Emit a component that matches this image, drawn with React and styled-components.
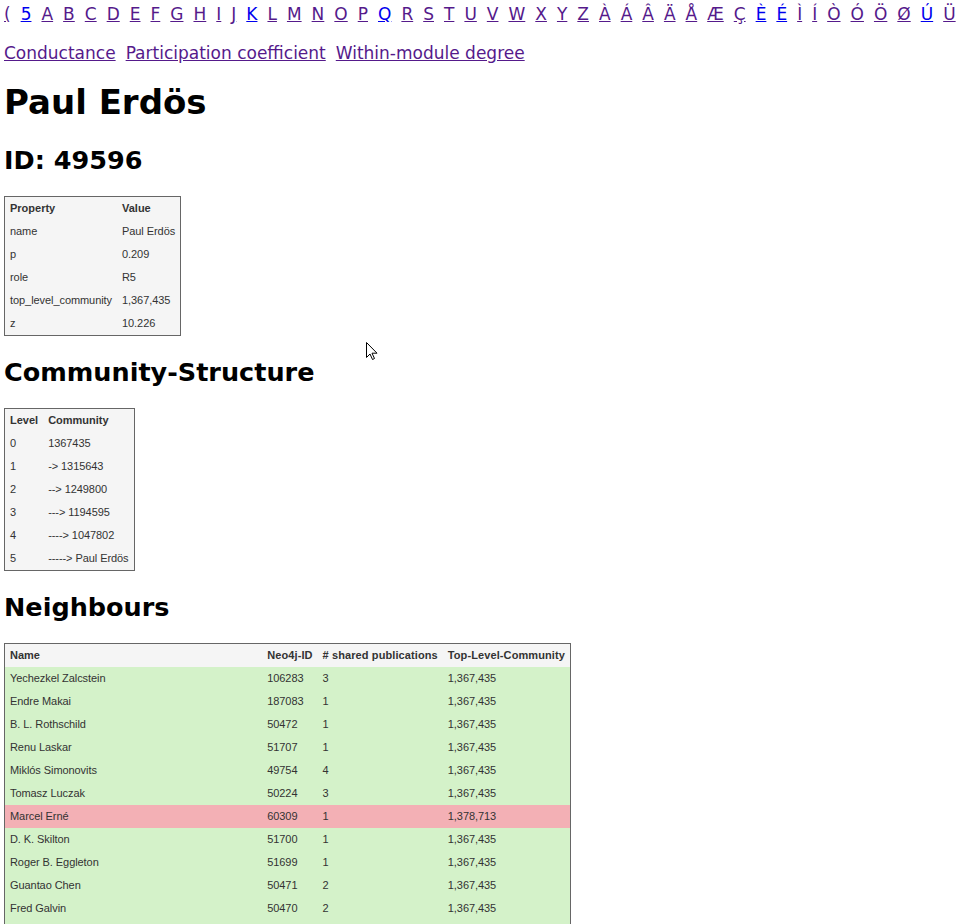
import React from 'react';
import styled, { createGlobalStyle } from 'styled-components';

const GlobalStyle = createGlobalStyle`
  body {
    margin: 0;
    background: #fff;
    font-family: "DejaVu Sans", Verdana, sans-serif;
    font-size: 17px;
    color: #000;
  }
`

const Page = styled.div`
  position: relative;
  padding: 4px 4px 0;
`

const LinkRow = styled.nav`
  display: flex;
  flex-wrap: wrap;
  column-gap: 10px;
  margin-top: ${p => p.$spaced ? '19px' : '0'};
`

const NavLink = styled.a`
  color: ${p => (p.$fresh ? '#0000ee' : '#551a8b')};
  text-decoration: underline;
  cursor: pointer;
`

const Title = styled.h1`
  font-size: 34px;
  font-weight: bold;
  margin: 19px 0 23px;
`

const Heading = styled.h2`
  font-size: 25.5px;
  font-weight: bold;
  margin: 21px 0;
`

const DataTable = styled.table`
  border-collapse: collapse;
  border: 1px solid #666;
  background: #f5f5f5;
  font-family: "Liberation Sans", Arial, sans-serif;
  font-size: 11px;
  line-height: 13px;
  color: #333;
  width: ${p => p.$width || 'auto'};
`

const HeadCell = styled.th`
  text-align: left;
  font-weight: bold;
  letter-spacing: ${p => (p.$wide ? '0.1px' : '0')};
  padding: 5px;
  white-space: nowrap;
  width: ${p => (p.$grow ? '100%' : 'auto')};
`

const Cell = styled.td`
  padding: 5px;
  letter-spacing: -0.07px;
  white-space: nowrap;
`

const Row = styled.tr`
  background: ${p => (p.$tone === 'same' ? '#d4f2c9' : p.$tone === 'other' ? '#f3b0b5' : 'transparent')};
`

const Pointer = styled.svg`
  position: absolute;
  left: 366px;
  top: 342px;
`

const letters = [
  '(', '5', 'A', 'B', 'C', 'D', 'E', 'F', 'G', 'H', 'I', 'J', 'K', 'L', 'M', 'N', 'O', 'P', 'Q', 'R',
  'S', 'T', 'U', 'V', 'W', 'X', 'Y', 'Z', 'À', 'Á', 'Â', 'Ä', 'Å', 'Æ', 'Ç', 'È', 'É', 'Ì', 'Í', 'Ò',
  'Ó', 'Ö', 'Ø', 'Ú', 'Ü',
]
const freshLetters = ['5', 'K', 'Q', 'È', 'É', 'Ú']

const properties = [
  ['name', 'Paul Erdös'],
  ['p', '0.209'],
  ['role', 'R5'],
  ['top_level_community', '1,367,435'],
  ['z', '10.226'],
]

const levels = [
  ['0', '1367435'],
  ['1', '-> 1315643'],
  ['2', '--> 1249800'],
  ['3', '---> 1194595'],
  ['4', '----> 1047802'],
  ['5', '-----> Paul Erdös'],
]

const neighbours = [
  ['Yechezkel Zalcstein', '106283', '3', '1,367,435'],
  ['Endre Makai', '187083', '1', '1,367,435'],
  ['B. L. Rothschild', '50472', '1', '1,367,435'],
  ['Renu Laskar', '51707', '1', '1,367,435'],
  ['Miklós Simonovits', '49754', '4', '1,367,435'],
  ['Tomasz Luczak', '50224', '3', '1,367,435'],
  ['Marcel Erné', '60309', '1', '1,378,713'],
  ['D. K. Skilton', '51700', '1', '1,367,435'],
  ['Roger B. Eggleton', '51699', '1', '1,367,435'],
  ['Guantao Chen', '50471', '2', '1,367,435'],
  ['Fred Galvin', '50470', '2', '1,367,435'],
  ['Ronald L. Graham', '49597', '27', '1,367,435'],
  ['Joel Spencer', '49598', '5', '1,367,435'],
]

const App = () => (
  <Page>
    <GlobalStyle />
    <LinkRow>
      {letters.map(l => (
        <NavLink key={l} $fresh={freshLetters.includes(l)}>{l}</NavLink>
      ))}
    </LinkRow>
    <LinkRow $spaced>
      <NavLink>Conductance</NavLink>
      <NavLink>Participation coefficient</NavLink>
      <NavLink>Within-module degree</NavLink>
    </LinkRow>

    <Title>Paul Erdös</Title>
    <Heading>ID: 49596</Heading>
    <DataTable>
      <thead>
        <tr><HeadCell>Property</HeadCell><HeadCell>Value</HeadCell></tr>
      </thead>
      <tbody>
        {properties.map(([k, v]) => (
          <tr key={k}><Cell>{k}</Cell><Cell>{v}</Cell></tr>
        ))}
      </tbody>
    </DataTable>

    <Heading>Community-Structure</Heading>
    <DataTable>
      <thead>
        <tr><HeadCell>Level</HeadCell><HeadCell>Community</HeadCell></tr>
      </thead>
      <tbody>
        {levels.map(([lvl, c]) => (
          <tr key={lvl}><Cell>{lvl}</Cell><Cell>{c}</Cell></tr>
        ))}
      </tbody>
    </DataTable>

    <Heading>Neighbours</Heading>
    <DataTable $width="567px">
      <thead>
        <tr>
          <HeadCell $grow>Name</HeadCell>
          <HeadCell $wide>Neo4j-ID</HeadCell>
          <HeadCell $wide># shared publications</HeadCell>
          <HeadCell $wide>Top-Level-Community</HeadCell>
        </tr>
      </thead>
      <tbody>
        {neighbours.map(([name, id, shared, top]) => (
          <Row key={id} $tone={top === '1,367,435' ? 'same' : 'other'}>
            <Cell>{name}</Cell><Cell>{id}</Cell><Cell>{shared}</Cell><Cell>{top}</Cell>
          </Row>
        ))}
      </tbody>
    </DataTable>

    <Pointer width="12" height="19" viewBox="0 0 12 19">
      <path d="M0.5 0.5 L0.5 15.5 L4 12 L6.5 17.5 L8.5 16.5 L6 11.2 L11 11.2 Z" fill="#fff" stroke="#000" strokeWidth="1" strokeLinejoin="round" />
    </Pointer>
  </Page>
)

export default App;
